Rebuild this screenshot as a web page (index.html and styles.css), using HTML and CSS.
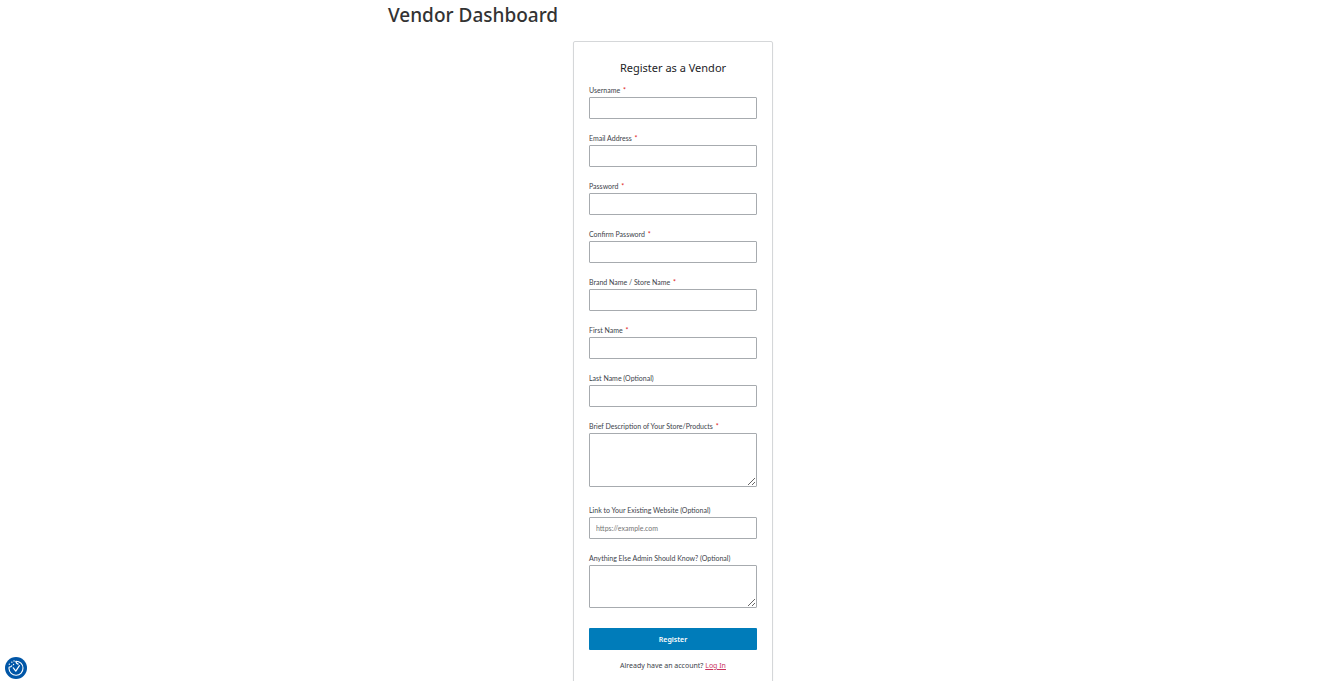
FILE: index.html
```html
<!DOCTYPE html>
<html lang="en">
<head>
<meta charset="utf-8">
<meta name="viewport" content="width=device-width, initial-scale=1">
<title>Vendor Dashboard</title>
<link rel="stylesheet" href="styles.css">
</head>
<body>
<main class="page">
  <h1 class="page-title">Vendor Dashboard</h1>
  <section class="card">
    <h2 class="card-title">Register as a Vendor</h2>
    <form class="form">
      <div class="field"><label for="username">Username <span class="required">*</span></label><input id="username" type="text"></div>
      <div class="field"><label for="email">Email Address <span class="required">*</span></label><input id="email" type="email"></div>
      <div class="field"><label for="password">Password <span class="required">*</span></label><input id="password" type="password"></div>
      <div class="field"><label for="confirm">Confirm Password <span class="required">*</span></label><input id="confirm" type="password"></div>
      <div class="field"><label for="brand">Brand Name / Store Name <span class="required">*</span></label><input id="brand" type="text"></div>
      <div class="field"><label for="first">First Name <span class="required">*</span></label><input id="first" type="text"></div>
      <div class="field"><label for="last">Last Name (Optional)</label><input id="last" type="text"></div>
      <div class="field field-area"><label for="description">Brief Description of Your Store/Products <span class="required">*</span></label><textarea id="description" class="area-large"></textarea></div>
      <div class="field"><label for="website">Link to Your Existing Website (Optional)</label><input id="website" type="url" placeholder="https://example.com"></div>
      <div class="field field-area"><label for="notes">Anything Else Admin Should Know? (Optional)</label><textarea id="notes" class="area-small"></textarea></div>
      <button class="submit" type="submit">Register</button>
    </form>
    <p class="login">Already have an account? <a href="#login">Log In</a></p>
  </section>
</main>
<button class="consent" type="button" aria-label="Consent preferences">
  <svg viewBox="0 0 22 22" width="22" height="22" fill="none" stroke="#fff" stroke-linecap="round" stroke-linejoin="round" aria-hidden="true">
    <circle cx="11" cy="11" r="11" fill="#0056a7" stroke="none"/>
    <path d="M11 4.200c3.900 0 7 3 7 6.900a7 7 0 0 1-14 .4c0-.6 0-1 .2-1.500 1.200.2 2-.2 2.600-1.200" stroke-width="1.100"/>
    <path d="M8.300 10.800l2.500 3.300 3.600-5.400M11 4.300c0 1.700.8 2.600 2.200 2.900" stroke-width="1.200"/>
    <path d="M4.300 7.200h.1M6.800 5.200h.1M8.500 7.500h.1M9 4h.1" stroke-width="1.300"/>
  </svg>
</button>
</body>
</html>
```
FILE: styles.css
```css
* { box-sizing: border-box; }

body {
  margin: 0;
  padding-left: 5px;
  background: #fff;
  color: #3c434a;
  font-family: "Segoe UI", "Noto Sans", "Open Sans", sans-serif;
}

.page {
  max-width: 570px;
  margin: 0 auto;
}

.page-title {
  margin: 0 0 11px;
  color: #333;
  font-size: 19px;
  font-weight: 500;
  line-height: 30px;
}

.card {
  max-width: 200px;
  margin: 0 auto;
  padding: 17px 15px 24px;
  border: 1px solid #d5d7d9;
  border-radius: 2px;
  box-shadow: 0 1px 2px rgba(0, 0, 0, 0.06);
}

.card-title {
  margin: 0 0 8px;
  color: #1d2327;
  font-size: 11px;
  font-weight: 400;
  line-height: 18px;
  text-align: center;
}

.form {
  display: flex;
  flex-direction: column;
}

.field {
  display: flex;
  flex-direction: column;
  gap: 2px;
  margin-bottom: 14px;
}

.field-area { margin-bottom: 18px; }

.field label {
  font-family: "Segoe UI", Lato, sans-serif;
  font-size: 7px;
  font-weight: 400;
  line-height: 10px;
  white-space: nowrap;
}

.required {
  margin-left: 1px;
  color: #e02020;
}

.field input,
.field textarea {
  width: 100%;
  padding: 0 6px;
  border: 1px solid #a7abaf;
  border-radius: 1px;
  background: #fff;
  color: #2c3338;
  font-family: "Segoe UI", Lato, sans-serif;
  font-size: 7px;
}

.field input { height: 22px; }
.field input::placeholder { color: #757575; }
.field textarea { resize: vertical; }
.field .area-large { height: 54px; }
.field .area-small { height: 43px; }

.submit {
  height: 22px;
  margin-top: 2px;
  padding: 0;
  border: 0;
  border-radius: 1px;
  background: #007cba;
  color: #fff;
  font-family: inherit;
  font-size: 7px;
  font-weight: 600;
}

.login {
  margin: 11px 0 0;
  font-size: 7px;
  line-height: 10px;
  text-align: center;
  white-space: nowrap;
}

.login a { color: #c9355e; }

.consent {
  position: fixed;
  bottom: 2px;
  left: 5px;
  width: 22px;
  height: 22px;
  padding: 0;
  border: 0;
  border-radius: 50%;
  background: none;
}

.consent svg { display: block; }
```
